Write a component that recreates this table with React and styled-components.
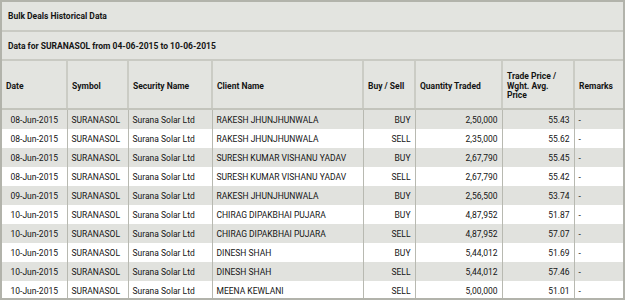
import React from "react";
import styled, { createGlobalStyle } from "styled-components";

const GlobalStyle = createGlobalStyle`
  html, body {
    margin: 0;
    padding: 0;
    background: #ffffff;
  }
  body {
    font-family: Roboto, "DejaVu Sans", sans-serif;
    color: #141414;
  }
`;

const Panel = styled.div`
  width: 625px;
  height: 300px;
  box-sizing: border-box;
  border: 2px solid #b2b3ab;
  overflow: hidden;
  background: #e3e4e0;
`;

const Caption = styled.div`
  height: ${(p) => p.$h}px;
  box-sizing: border-box;
  display: flex;
  align-items: center;
  padding-left: 6px;
  font-size: 8.5px;
  font-weight: bold;
  border-bottom: 2px solid #c9cac3;
`;

const Table = styled.table`
  width: 621px;
  border-collapse: collapse;
  table-layout: fixed;
  font-size: 8.5px;
`;

const HeadCell = styled.th`
  height: 43px;
  padding: 4px 4px 0;
  text-align: left;
  font-weight: bold;
  line-height: 9.5px;
  vertical-align: middle;
  background: #e3e4e0;
  border-left: 2px solid #cbccc5;
  border-bottom: 2px solid #c3c4bc;
  &:first-child {
    border-left: none;
  }
`;

const Row = styled.tr`
  background: ${(p) => (p.$shade ? "#e1e2de" : "#ffffff")};
`;

const Cell = styled.td`
  height: 19px;
  padding: 0 4px;
  text-align: ${(p) => p.$align || "left"};
  white-space: nowrap;
  overflow: hidden;
  border-left: 1px solid #b8b9b1;
  &:first-child {
    border-left: none;
  }
`;

const columns = [
  { label: "Date", width: 65 },
  { label: "Symbol", width: 61 },
  { label: "Security Name", width: 84 },
  { label: "Client Name", width: 151 },
  { label: "Buy / Sell", width: 52 },
  { label: "Quantity Traded", width: 87 },
  { label: "Trade Price / Wght. Avg. Price", width: 72 },
  { label: "Remarks", width: 49 },
];

const deals = [
  ["08-Jun-2015", "RAKESH JHUNJHUNWALA", "BUY", "2,50,000", "55.43"],
  ["08-Jun-2015", "RAKESH JHUNJHUNWALA", "SELL", "2,35,000", "55.62"],
  ["08-Jun-2015", "SURESH KUMAR VISHANU YADAV", "BUY", "2,67,790", "55.45"],
  ["08-Jun-2015", "SURESH KUMAR VISHANU YADAV", "SELL", "2,67,790", "55.42"],
  ["09-Jun-2015", "RAKESH JHUNJHUNWALA", "BUY", "2,56,500", "53.74"],
  ["10-Jun-2015", "CHIRAG DIPAKBHAI PUJARA", "BUY", "4,87,952", "51.87"],
  ["10-Jun-2015", "CHIRAG DIPAKBHAI PUJARA", "SELL", "4,87,952", "57.07"],
  ["10-Jun-2015", "DINESH SHAH", "BUY", "5,44,012", "51.69"],
  ["10-Jun-2015", "DINESH SHAH", "SELL", "5,44,012", "57.46"],
  ["10-Jun-2015", "MEENA KEWLANI", "SELL", "5,00,000", "51.01"],
];

function App() {
  return (
    <>
      <GlobalStyle />
      <Panel>
        <Caption $h={30}>Bulk Deals Historical Data</Caption>
        <Caption $h={29}>Data for SURANASOL from 04-06-2015 to 10-06-2015</Caption>
        <Table>
          <colgroup>
            {columns.map((c) => (
              <col key={c.label} style={{ width: c.width }} />
            ))}
          </colgroup>
          <thead>
            <tr>
              {columns.map((c) => (
                <HeadCell key={c.label}>{c.label}</HeadCell>
              ))}
            </tr>
          </thead>
          <tbody>
            {deals.map((d, i) => (
              <Row key={i} $shade={i % 2 === 0}>
                <Cell $align="center">{d[0]}</Cell>
                <Cell>SURANASOL</Cell>
                <Cell>Surana Solar Ltd</Cell>
                <Cell>{d[1]}</Cell>
                <Cell $align="right">{d[2]}</Cell>
                <Cell $align="right">{d[3]}</Cell>
                <Cell $align="right">{d[4]}</Cell>
                <Cell>-</Cell>
              </Row>
            ))}
          </tbody>
        </Table>
      </Panel>
    </>
  );
}

export default App;
